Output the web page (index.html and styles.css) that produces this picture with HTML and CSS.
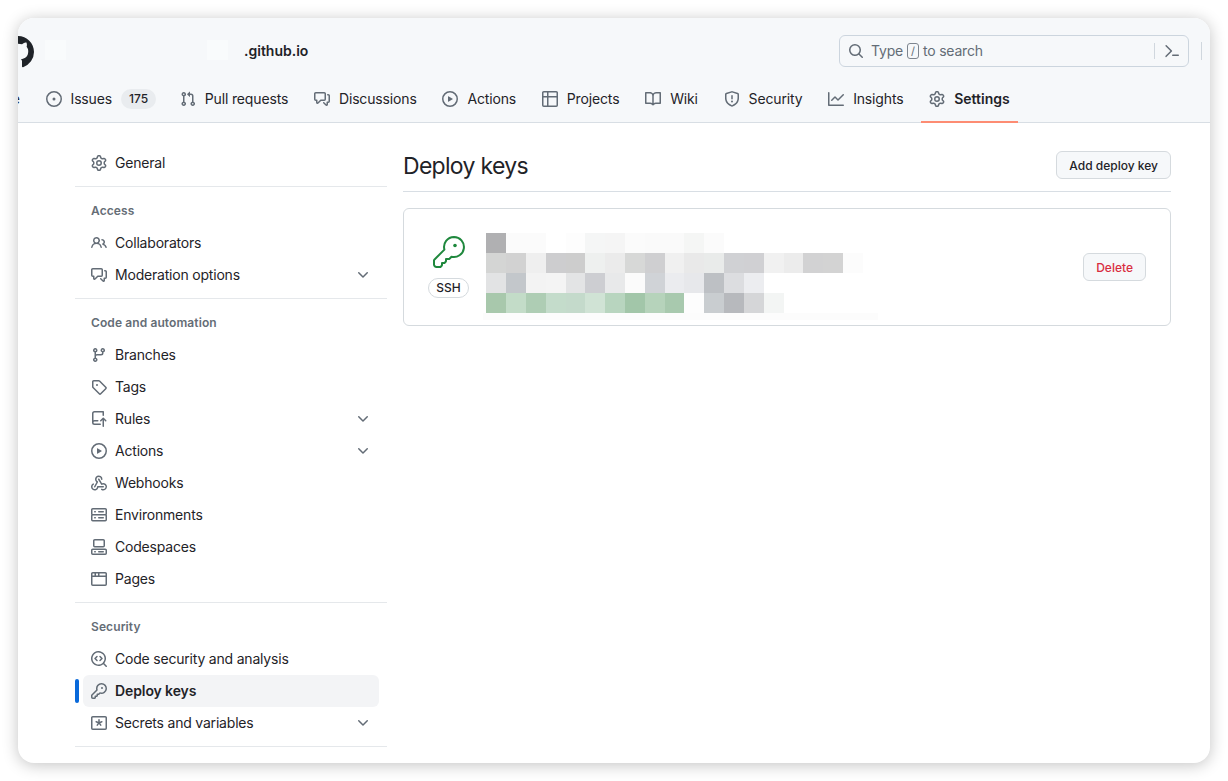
FILE: index.html
```html
<!DOCTYPE html>
<html lang="en">
<head>
<meta charset="utf-8">
<title>Deploy keys</title>
<link rel="stylesheet" href="styles.css">
</head>
<body>
<svg class="sprite" xmlns="http://www.w3.org/2000/svg">
<symbol id="i-mark" viewBox="0 0 16 16"><path d="M8 0c4.42 0 8 3.58 8 8a8.013 8.013 0 0 1-5.45 7.59c-.4.08-.55-.17-.55-.38 0-.27.01-1.13.01-2.2 0-.75-.25-1.23-.54-1.48 1.78-.2 3.65-.88 3.65-3.95 0-.88-.31-1.59-.82-2.15.08-.2.36-1.02-.08-2.12 0 0-.67-.22-2.2.82-.64-.18-1.32-.27-2-.27-.68 0-1.36.09-2 .27-1.53-1.03-2.2-.82-2.2-.82-.44 1.1-.16 1.92-.08 2.12-.51.56-.82 1.28-.82 2.15 0 3.06 1.86 3.75 3.64 3.95-.23.2-.44.55-.51 1.07-.46.21-1.61.55-2.33-.66-.15-.24-.6-.83-1.23-.82-.67.01-.27.38.01.53.34.19.73.9.82 1.13.16.45.68 1.31 2.69.94 0 .67.01 1.3.01 1.49 0 .21-.15.45-.55.38A7.995 7.995 0 0 1 0 8c0-4.42 3.58-8 8-8Z"/></symbol>
<symbol id="i-issue" viewBox="0 0 16 16"><path d="M8 9.5a1.5 1.5 0 1 0 0-3 1.5 1.5 0 0 0 0 3Z"/><path d="M8 0a8 8 0 1 1 0 16A8 8 0 0 1 8 0ZM1.5 8a6.5 6.5 0 1 0 13 0 6.5 6.5 0 0 0-13 0Z"/></symbol>
<symbol id="i-pr" viewBox="0 0 16 16"><path d="M1.5 3.25a2.25 2.25 0 1 1 3 2.122v5.256a2.251 2.251 0 1 1-1.5 0V5.372A2.25 2.25 0 0 1 1.5 3.25Zm5.677-.177L9.573.677A.25.25 0 0 1 10 .854V2.5h1A2.5 2.5 0 0 1 13.5 5v5.628a2.251 2.251 0 1 1-1.5 0V5a1 1 0 0 0-1-1h-1v1.646a.25.25 0 0 1-.427.177L7.177 3.427a.25.25 0 0 1 0-.354ZM3.75 2.5a.75.75 0 1 0 0 1.5.75.75 0 0 0 0-1.5Zm0 9.5a.75.75 0 1 0 0 1.5.75.75 0 0 0 0-1.5Zm8.25.75a.75.75 0 1 0 1.5 0 .75.75 0 0 0-1.5 0Z"/></symbol>
<symbol id="i-discuss" viewBox="0 0 16 16"><path d="M1.75 1h8.5c.966 0 1.75.784 1.75 1.75v5.5A1.75 1.75 0 0 1 10.25 10H7.061l-2.574 2.573A1.458 1.458 0 0 1 2 11.543V10h-.25A1.75 1.75 0 0 1 0 8.25v-5.5C0 1.784.784 1 1.75 1ZM1.5 2.75v5.5c0 .138.112.25.25.25h1a.75.75 0 0 1 .75.75v2.19l2.72-2.72a.749.749 0 0 1 .53-.22h3.5a.25.25 0 0 0 .25-.25v-5.5a.25.25 0 0 0-.25-.25h-8.5a.25.25 0 0 0-.25.25Zm13 2a.25.25 0 0 0-.25-.25h-.5a.75.75 0 0 1 0-1.5h.5c.966 0 1.75.784 1.75 1.75v5.5A1.75 1.75 0 0 1 14.25 12H14v1.543a1.458 1.458 0 0 1-2.487 1.03L9.22 12.28a.749.749 0 0 1 .326-1.275.749.749 0 0 1 .734.215l2.22 2.22v-2.19a.75.75 0 0 1 .75-.75h1a.25.25 0 0 0 .25-.25Z"/></symbol>
<symbol id="i-play" viewBox="0 0 16 16"><path d="M8 0a8 8 0 1 1 0 16A8 8 0 0 1 8 0ZM1.5 8a6.5 6.5 0 1 0 13 0 6.5 6.5 0 0 0-13 0Zm4.879-2.773 4.264 2.559a.25.25 0 0 1 0 .428l-4.264 2.559A.25.25 0 0 1 6 10.559V5.442a.25.25 0 0 1 .379-.215Z"/></symbol>
<symbol id="i-table" viewBox="0 0 16 16"><path d="M0 1.75C0 .784.784 0 1.75 0h12.5C15.216 0 16 .784 16 1.75v12.5A1.75 1.75 0 0 1 14.25 16H1.75A1.75 1.75 0 0 1 0 14.25ZM6.5 6.5v8h7.75a.25.25 0 0 0 .25-.25V6.5Zm8-1.5V1.75a.25.25 0 0 0-.25-.25H6.5V5Zm-13 1.5v7.75c0 .138.112.25.25.25H5v-8ZM5 5V1.5H1.75a.25.25 0 0 0-.25.25V5Z"/></symbol>
<symbol id="i-book" viewBox="0 0 16 16"><path d="M0 1.75A.75.75 0 0 1 .75 1h4.253c1.227 0 2.317.59 3 1.501A3.743 3.743 0 0 1 11.006 1h4.245a.75.75 0 0 1 .75.75v10.5a.75.75 0 0 1-.75.75h-4.507a2.25 2.25 0 0 0-1.591.659l-.622.621a.75.75 0 0 1-1.06 0l-.622-.621A2.25 2.25 0 0 0 5.258 13H.75a.75.75 0 0 1-.75-.75Zm7.251 10.324.004-5.073-.002-2.253A2.25 2.25 0 0 0 5.003 2.5H1.5v9h3.757a3.75 3.75 0 0 1 1.994.574ZM8.755 4.75l-.004 7.322a3.752 3.752 0 0 1 1.992-.572H14.5v-9h-3.495a2.25 2.25 0 0 0-2.25 2.25Z"/></symbol>
<symbol id="i-shield" viewBox="0 0 16 16"><path d="M7.467.133a1.748 1.748 0 0 1 1.066 0l5.25 1.68A1.75 1.75 0 0 1 15 3.48V7c0 1.566-.32 3.182-1.303 4.682-.983 1.498-2.585 2.813-5.032 3.855a1.697 1.697 0 0 1-1.33 0c-2.447-1.042-4.049-2.357-5.032-3.855C1.32 10.182 1 8.566 1 7V3.48a1.75 1.75 0 0 1 1.217-1.667Zm.61 1.429a.25.25 0 0 0-.153 0l-5.25 1.68a.25.25 0 0 0-.174.238V7c0 1.358.275 2.666 1.057 3.86.784 1.194 2.121 2.34 4.366 3.297a.196.196 0 0 0 .154 0c2.245-.956 3.582-2.104 4.366-3.298C13.225 9.666 13.5 8.36 13.5 7V3.48a.251.251 0 0 0-.174-.237l-5.25-1.68ZM8.75 4.75v3a.75.75 0 0 1-1.5 0v-3a.75.75 0 0 1 1.5 0ZM9 10.5a1 1 0 1 1-2 0 1 1 0 0 1 2 0Z"/></symbol>
<symbol id="i-graph" viewBox="0 0 16 16"><path d="M1.5 1.75V13.5h13.75a.75.75 0 0 1 0 1.5H.75a.75.75 0 0 1-.75-.75V1.75a.75.75 0 0 1 1.5 0Zm14.28 2.53-5.25 5.25a.75.75 0 0 1-1.06 0L7 7.06 4.28 9.78a.751.751 0 0 1-1.042-.018.751.751 0 0 1-.018-1.042l3.25-3.25a.75.75 0 0 1 1.06 0L10 7.94l4.72-4.72a.751.751 0 0 1 1.042.018.751.751 0 0 1 .018 1.042Z"/></symbol>
<symbol id="i-gear" viewBox="0 0 16 16"><path d="M8 0a8.2 8.2 0 0 1 .701.031C9.444.095 9.99.645 10.16 1.29l.288 1.107c.018.066.079.158.212.224.231.114.454.243.668.386.123.082.233.09.299.071l1.103-.303c.644-.176 1.392.021 1.82.63.27.385.506.792.704 1.218.315.675.111 1.422-.364 1.891l-.814.806c-.049.048-.098.147-.088.294.016.257.016.515 0 .772-.01.147.038.246.088.294l.814.806c.475.469.679 1.216.364 1.891a7.977 7.977 0 0 1-.704 1.217c-.428.61-1.176.807-1.82.63l-1.102-.302c-.067-.019-.177-.011-.3.071a5.909 5.909 0 0 1-.668.386c-.133.066-.194.158-.211.224l-.29 1.106c-.168.646-.715 1.196-1.458 1.26a8.006 8.006 0 0 1-1.402 0c-.743-.064-1.289-.614-1.458-1.26l-.289-1.106c-.018-.066-.079-.158-.212-.224a5.738 5.738 0 0 1-.668-.386c-.123-.082-.233-.09-.299-.071l-1.103.303c-.644.176-1.392-.021-1.82-.63a8.12 8.12 0 0 1-.704-1.218c-.315-.675-.111-1.422.363-1.891l.815-.806c.05-.048.098-.147.088-.294a6.214 6.214 0 0 1 0-.772c.01-.147-.038-.246-.088-.294l-.815-.806C.635 6.045.431 5.298.746 4.623a7.92 7.92 0 0 1 .704-1.217c.428-.61 1.176-.807 1.82-.63l1.102.302c.067.019.177.011.3-.071.214-.143.437-.272.668-.386.133-.066.194-.158.211-.224l.29-1.106C6.009.645 6.556.095 7.299.03 7.53.01 7.764 0 8 0Zm-.571 1.525c-.036.003-.108.036-.137.146l-.289 1.105c-.147.561-.549.967-.998 1.189-.173.086-.34.183-.5.29-.417.278-.97.423-1.529.27l-1.103-.303c-.109-.03-.175.016-.195.045-.22.312-.412.644-.573.99-.014.031-.021.11.059.19l.815.806c.411.406.562.957.53 1.456a4.709 4.709 0 0 0 0 .582c.032.499-.119 1.05-.53 1.456l-.815.806c-.081.08-.073.159-.059.19.162.346.353.677.573.989.02.03.085.076.195.046l1.102-.303c.56-.153 1.113-.008 1.53.27.161.107.328.204.501.29.447.222.85.629.997 1.189l.289 1.105c.029.109.101.143.137.146a6.6 6.6 0 0 0 1.142 0c.036-.003.108-.036.137-.146l.289-1.105c.147-.561.549-.967.998-1.189.173-.086.34-.183.5-.29.417-.278.97-.423 1.529-.27l1.103.303c.109.029.175-.016.195-.045.22-.313.411-.644.573-.99.014-.031.021-.11-.059-.19l-.815-.806c-.411-.406-.562-.957-.53-1.456a4.709 4.709 0 0 0 0-.582c-.032-.499.119-1.05.53-1.456l.815-.806c.081-.08.073-.159.059-.19a6.464 6.464 0 0 0-.573-.989c-.02-.03-.085-.076-.195-.046l-1.102.303c-.56.153-1.113.008-1.53-.27a4.44 4.44 0 0 0-.501-.29c-.447-.222-.85-.629-.997-1.189l-.289-1.105c-.029-.11-.101-.143-.137-.146a6.6 6.6 0 0 0-1.142 0ZM11 8a3 3 0 1 1-6 0 3 3 0 0 1 6 0ZM9.5 8a1.5 1.5 0 1 0-3.001.001A1.5 1.5 0 0 0 9.5 8Z"/></symbol>
<symbol id="i-people" viewBox="0 0 16 16"><path d="M2 5.5a3.5 3.5 0 1 1 5.898 2.549 5.508 5.508 0 0 1 3.034 4.084.75.75 0 1 1-1.482.235 4 4 0 0 0-7.9 0 .75.75 0 0 1-1.482-.236A5.507 5.507 0 0 1 3.102 8.05 3.493 3.493 0 0 1 2 5.5ZM11 4a3.001 3.001 0 0 1 2.22 5.018 5.01 5.01 0 0 1 2.56 3.012.749.749 0 0 1-.885.954.752.752 0 0 1-.549-.514 3.507 3.507 0 0 0-2.522-2.372.75.75 0 0 1-.574-.73v-.352a.75.75 0 0 1 .416-.672A1.5 1.5 0 0 0 11 5.5.75.75 0 0 1 11 4Zm-5.5-.5a2 2 0 1 0-.001 3.999A2 2 0 0 0 5.5 3.5Z"/></symbol>
<symbol id="i-branch" viewBox="0 0 16 16"><path d="M9.5 3.25a2.25 2.25 0 1 1 3 2.122V6A2.5 2.5 0 0 1 10 8.5H6a1 1 0 0 0-1 1v1.128a2.251 2.251 0 1 1-1.5 0V5.372a2.25 2.25 0 1 1 1.5 0v1.836A2.493 2.493 0 0 1 6 7h4a1 1 0 0 0 1-1v-.628A2.25 2.25 0 0 1 9.5 3.25Zm-6 0a.75.75 0 1 0 1.5 0 .75.75 0 0 0-1.5 0Zm8.25-.75a.75.75 0 1 0 0 1.5.75.75 0 0 0 0-1.5ZM4.25 12a.75.75 0 1 0 0 1.5.75.75 0 0 0 0-1.5Z"/></symbol>
<symbol id="i-tag" viewBox="0 0 16 16"><path d="M1 7.775V2.75C1 1.784 1.784 1 2.75 1h5.025c.464 0 .91.184 1.238.513l6.25 6.25a1.75 1.75 0 0 1 0 2.474l-5.026 5.026a1.75 1.75 0 0 1-2.474 0l-6.25-6.25A1.752 1.752 0 0 1 1 7.775Zm1.5 0c0 .066.026.13.073.177l6.25 6.25a.25.25 0 0 0 .354 0l5.025-5.025a.25.25 0 0 0 0-.354l-6.25-6.25a.25.25 0 0 0-.177-.073H2.75a.25.25 0 0 0-.25.25ZM6 5a1 1 0 1 1 0 2 1 1 0 0 1 0-2Z"/></symbol>
<symbol id="i-push" viewBox="0 0 16 16"><path d="M1 2.5A2.5 2.5 0 0 1 3.5 0h8.75a.75.75 0 0 1 .75.75v3.5a.75.75 0 0 1-1.5 0V1.5h-8a1 1 0 0 0-1 1v6.708A2.493 2.493 0 0 1 3.5 9h3.25a.75.75 0 0 1 0 1.5H3.5a1 1 0 0 0 0 2h5.75a.75.75 0 0 1 0 1.5H3.5A2.5 2.5 0 0 1 1 11.5Zm13.23 7.79h-.001l-1.224-1.224v6.184a.75.75 0 0 1-1.5 0V9.066L10.28 10.29a.75.75 0 0 1-1.06-1.061l2.505-2.504a.75.75 0 0 1 1.06 0L15.29 9.23a.751.751 0 0 1-.018 1.042.751.751 0 0 1-1.042.018Z"/></symbol>
<symbol id="i-webhook" viewBox="0 0 16 16"><path d="M5.5 4.25a2.25 2.25 0 0 1 4.5 0 .75.75 0 0 0 1.5 0 3.75 3.75 0 1 0-6.14 2.889l-2.272 4.258a.75.75 0 0 0 1.324.706L7 7.25a.75.75 0 0 0-.309-1.015A2.25 2.25 0 0 1 5.5 4.25Z"/><path d="M7.364 3.607a.75.75 0 0 1 1.03.257l2.608 4.349a3.75 3.75 0 1 1-.628 6.785.75.75 0 0 1 .752-1.299 2.25 2.25 0 1 0-.033-3.88.75.75 0 0 1-1.03-.256L7.107 4.636a.75.75 0 0 1 .257-1.03Z"/><path d="M2.9 8.776A.75.75 0 0 1 2.625 9.8 2.25 2.25 0 1 0 6 11.75a.75.75 0 0 1 .75-.751h5.5a.75.75 0 0 1 0 1.5H7.425a3.751 3.751 0 1 1-5.55-3.998.75.75 0 0 1 1.024.274Z"/></symbol>
<symbol id="i-server" viewBox="0 0 16 16"><path d="M1.75 1h12.5c.966 0 1.75.784 1.75 1.75v4c0 .372-.116.717-.314 1 .198.283.314.628.314 1v4a1.75 1.75 0 0 1-1.75 1.75H1.75A1.75 1.75 0 0 1 0 12.75v-4c0-.358.109-.707.314-1a1.739 1.739 0 0 1-.314-1v-4C0 1.784.784 1 1.75 1ZM1.5 2.75v4c0 .138.112.25.25.25h12.5a.25.25 0 0 0 .25-.25v-4a.25.25 0 0 0-.25-.25H1.75a.25.25 0 0 0-.25.25Zm.25 5.75a.25.25 0 0 0-.25.25v4c0 .138.112.25.25.25h12.5a.25.25 0 0 0 .25-.25v-4a.25.25 0 0 0-.25-.25ZM7 4.75A.75.75 0 0 1 7.75 4h4.5a.75.75 0 0 1 0 1.5h-4.5A.75.75 0 0 1 7 4.75Zm.75 5.25h4.5a.75.75 0 0 1 0 1.5h-4.5a.75.75 0 0 1 0-1.5ZM3 4.75A.75.75 0 0 1 3.75 4h.5a.75.75 0 0 1 0 1.5h-.5A.75.75 0 0 1 3 4.75ZM3.75 10h.5a.75.75 0 0 1 0 1.5h-.5a.75.75 0 0 1 0-1.5Z"/></symbol>
<symbol id="i-codespaces" viewBox="0 0 16 16"><path d="M0 11.25c0-.966.784-1.75 1.75-1.75h12.5c.966 0 1.75.784 1.75 1.75v3A1.75 1.75 0 0 1 14.25 16H1.75A1.75 1.75 0 0 1 0 14.25Zm2-9.5C2 .784 2.784 0 3.75 0h8.5C13.216 0 14 .784 14 1.75v5a1.75 1.75 0 0 1-1.75 1.75h-8.5A1.75 1.75 0 0 1 2 6.75Zm1.75-.25a.25.25 0 0 0-.25.25v5c0 .138.112.25.25.25h8.5a.25.25 0 0 0 .25-.25v-5a.25.25 0 0 0-.25-.25Zm-2 9.5a.25.25 0 0 0-.25.25v3c0 .138.112.25.25.25h12.5a.25.25 0 0 0 .25-.25v-3a.25.25 0 0 0-.25-.25Z"/><path d="M7 12.75a.75.75 0 0 1 .75-.75h4.5a.75.75 0 0 1 0 1.5h-4.5a.75.75 0 0 1-.75-.75Zm-4 0a.75.75 0 0 1 .75-.75h.5a.75.75 0 0 1 0 1.5h-.5a.75.75 0 0 1-.75-.75Z"/></symbol>
<symbol id="i-browser" viewBox="0 0 16 16"><path d="M0 2.75C0 1.784.784 1 1.75 1h12.5c.966 0 1.75.784 1.75 1.75v10.5A1.75 1.75 0 0 1 14.25 15H1.75A1.75 1.75 0 0 1 0 13.25ZM14.5 6h-13v7.25c0 .138.112.25.25.25h12.5a.25.25 0 0 0 .25-.25Zm-6-3.5v2h6V2.75a.25.25 0 0 0-.25-.25ZM5 2.5v2h2v-2Zm-3.25 0a.25.25 0 0 0-.25.25V4.5h2v-2Z"/></symbol>
<symbol id="i-codescan" viewBox="0 0 16 16"><path d="M8.47 4.97a.75.75 0 0 0 0 1.06L9.94 7.5 8.47 8.97a.75.75 0 1 0 1.06 1.06l2-2a.75.75 0 0 0 0-1.06l-2-2a.75.75 0 0 0-1.06 0ZM6.53 6.03a.75.75 0 0 0-1.06-1.06l-2 2a.75.75 0 0 0 0 1.06l2 2a.75.75 0 1 0 1.06-1.06L5.06 7.5l1.47-1.47Z"/><path d="M12.246 13.307a7.501 7.501 0 1 1 1.06-1.06l2.474 2.473a.749.749 0 0 1-.326 1.275.749.749 0 0 1-.734-.215ZM1.5 7.5a6.002 6.002 0 0 0 3.608 5.504 6.002 6.002 0 0 0 6.486-1.117.748.748 0 0 1 .292-.293A6 6 0 1 0 1.5 7.5Z"/></symbol>
<symbol id="i-key" viewBox="0 0 16 16"><path d="M10.5 0a5.499 5.499 0 1 1-1.288 10.848l-.932.932a.749.749 0 0 1-.53.22H7v.75a.749.749 0 0 1-.22.53l-.5.5a.749.749 0 0 1-.53.22H5v.75a.749.749 0 0 1-.22.53l-.5.5a.749.749 0 0 1-.53.22h-2A1.75 1.75 0 0 1 0 14.25v-2c0-.199.079-.389.22-.53l4.932-4.932A5.5 5.5 0 0 1 10.5 0Zm-4 5.5c-.001.431.069.86.205 1.269a.75.75 0 0 1-.181.768L1.5 12.56v1.69c0 .138.112.25.25.25h1.69l.06-.06v-1.19a.75.75 0 0 1 .75-.75h1.19l.06-.06v-1.19a.75.75 0 0 1 .75-.75h1.19l1.023-1.025a.75.75 0 0 1 .768-.18A4 4 0 1 0 6.5 5.5ZM11 6a1 1 0 1 1 0-2 1 1 0 0 1 0 2Z"/></symbol>
<symbol id="i-asterisk" viewBox="0 0 16 16"><path d="M0 2.75C0 1.784.784 1 1.75 1h12.5c.966 0 1.75.784 1.75 1.75v10.5A1.75 1.75 0 0 1 14.25 15H1.75A1.75 1.75 0 0 1 0 13.25Zm1.75-.25a.25.25 0 0 0-.25.25v10.5c0 .138.112.25.25.25h12.5a.25.25 0 0 0 .25-.25V2.75a.25.25 0 0 0-.25-.25Z"/><path d="M7.25 4.75a.75.75 0 0 1 1.5 0v1.956l1.86-.604a.75.75 0 1 1 .463 1.426l-1.86.604 1.15 1.583a.75.75 0 1 1-1.214.882L8 9.014l-1.15 1.583a.75.75 0 1 1-1.214-.882l1.15-1.583-1.86-.604a.75.75 0 1 1 .463-1.426l1.86.604Z"/></symbol>
<symbol id="i-chevron" viewBox="0 0 16 16"><path d="M12.78 5.22a.749.749 0 0 1 0 1.06l-4.25 4.25a.749.749 0 0 1-1.06 0L3.22 6.28a.749.749 0 1 1 1.06-1.06L8 8.939l3.72-3.719a.749.749 0 0 1 1.06 0Z"/></symbol>
<symbol id="i-search" viewBox="0 0 16 16"><path d="M10.68 11.74a6 6 0 0 1-7.922-8.982 6 6 0 0 1 8.982 7.922l3.04 3.04a.749.749 0 0 1-.326 1.275.749.749 0 0 1-.734-.215ZM11.5 7a4.499 4.499 0 1 0-8.997 0A4.499 4.499 0 0 0 11.5 7Z"/></symbol>
<symbol id="i-palette" viewBox="0 0 16 16"><path d="m6.354 8.04-4.773 4.773a.75.75 0 1 0 1.061 1.06L7.945 8.57a.75.75 0 0 0 0-1.06L2.642 2.206a.75.75 0 0 0-1.06 1.061L6.353 8.04ZM8.75 11.5a.75.75 0 0 0 0 1.5h5.5a.75.75 0 0 0 0-1.5h-5.5Z"/></symbol>
</svg>

<div class="window">
  <header class="header">
    <div class="toprow">
      <svg class="logo"><use href="#i-mark"/></svg>
      <div class="redacted"><span class="blot"></span><span class="blot"></span></div>
      <span class="repo">.github.io</span>
      <div class="search">
        <svg class="ico"><use href="#i-search"/></svg>
        <span class="search-text"><span>Type</span><span class="kbd">/</span><span>to search</span></span>
        <span class="search-sep"></span>
        <svg class="ico"><use href="#i-palette"/></svg>
      </div>
      <span class="top-sep"></span>
    </div>
    <nav class="tabs">
      <a class="tab">Code</a>
      <a class="tab"><svg class="ico"><use href="#i-issue"/></svg>Issues<span class="counter">175</span></a>
      <a class="tab"><svg class="ico"><use href="#i-pr"/></svg>Pull requests</a>
      <a class="tab"><svg class="ico"><use href="#i-discuss"/></svg>Discussions</a>
      <a class="tab"><svg class="ico"><use href="#i-play"/></svg>Actions</a>
      <a class="tab"><svg class="ico"><use href="#i-table"/></svg>Projects</a>
      <a class="tab"><svg class="ico"><use href="#i-book"/></svg>Wiki</a>
      <a class="tab"><svg class="ico"><use href="#i-shield"/></svg>Security</a>
      <a class="tab"><svg class="ico"><use href="#i-graph"/></svg>Insights</a>
      <a class="tab tab-active"><svg class="ico"><use href="#i-gear"/></svg>Settings</a>
    </nav>
  </header>

  <div class="page">
    <aside class="side">
      <a class="item"><svg class="ico"><use href="#i-gear"/></svg>General</a>
      <hr class="rule">
      <div class="label">Access</div>
      <a class="item"><svg class="ico"><use href="#i-people"/></svg>Collaborators</a>
      <a class="item"><svg class="ico"><use href="#i-discuss"/></svg>Moderation options<svg class="ico chev"><use href="#i-chevron"/></svg></a>
      <hr class="rule">
      <div class="label">Code and automation</div>
      <a class="item"><svg class="ico"><use href="#i-branch"/></svg>Branches</a>
      <a class="item"><svg class="ico"><use href="#i-tag"/></svg>Tags</a>
      <a class="item"><svg class="ico"><use href="#i-push"/></svg>Rules<svg class="ico chev"><use href="#i-chevron"/></svg></a>
      <a class="item"><svg class="ico"><use href="#i-play"/></svg>Actions<svg class="ico chev"><use href="#i-chevron"/></svg></a>
      <a class="item"><svg class="ico"><use href="#i-webhook"/></svg>Webhooks</a>
      <a class="item"><svg class="ico"><use href="#i-server"/></svg>Environments</a>
      <a class="item"><svg class="ico"><use href="#i-codespaces"/></svg>Codespaces</a>
      <a class="item"><svg class="ico"><use href="#i-browser"/></svg>Pages</a>
      <hr class="rule">
      <div class="label">Security</div>
      <a class="item"><svg class="ico"><use href="#i-codescan"/></svg>Code security and analysis</a>
      <a class="item item-active"><svg class="ico"><use href="#i-key"/></svg>Deploy keys</a>
      <a class="item"><svg class="ico"><use href="#i-asterisk"/></svg>Secrets and variables<svg class="ico chev"><use href="#i-chevron"/></svg></a>
      <hr class="rule">
    </aside>

    <main class="main">
      <div class="head">
        <h1 class="title">Deploy keys</h1>
        <button class="btn">Add deploy key</button>
      </div>
      <section class="card">
        <div class="keycol">
          <svg class="bigkey" viewBox="0 0 32 32"><path d="M21 1a10 10 0 1 1-2.5 19.7l-2 2a1 1 0 0 1-.7.3H13v2.1a1 1 0 0 1-.3.7l-1 1a1 1 0 0 1-.7.3H9v1.9a1 1 0 0 1-.3.7l-1 1a1 1 0 0 1-.7.3H3.5A2.5 2.5 0 0 1 1 28.5v-4.1a1 1 0 0 1 .3-.7l10.1-10.1A10 10 0 0 1 21 1Z"/><circle class="keydot" cx="22" cy="9.5" r="1.8"/></svg>
          <span class="ssh">SSH</span>
        </div>
        <svg class="pixels" viewBox="0 0 400 116" shape-rendering="crispEdges">
          <g transform="translate(0 24)">
            <rect x="3" y="0" width="20" height="20" fill="#b0b0b2"/><rect x="23" y="0" width="20" height="20" fill="#fbfbfb"/><rect x="43" y="0" width="20" height="20" fill="#fbfbfb"/><rect x="83" y="0" width="20" height="20" fill="#fdfdfd"/><rect x="102" y="0" width="20" height="20" fill="#f5f6f6"/><rect x="122" y="0" width="20" height="20" fill="#f5f5f5"/><rect x="142" y="0" width="20" height="20" fill="#fbfbfb"/><rect x="162" y="0" width="20" height="20" fill="#fafafa"/><rect x="182" y="0" width="20" height="20" fill="#fafafa"/><rect x="201" y="0" width="20" height="20" fill="#f5f6f5"/><rect x="221" y="0" width="20" height="20" fill="#fbfbfb"/>
            <rect x="3" y="20" width="20" height="20" fill="#d4d5d4"/><rect x="23" y="20" width="20" height="20" fill="#d2d2d2"/><rect x="43" y="20" width="20" height="20" fill="#efefef"/><rect x="63" y="20" width="20" height="20" fill="#cdcdcf"/><rect x="83" y="20" width="20" height="20" fill="#cdcdcd"/><rect x="102" y="20" width="20" height="20" fill="#eef0ef"/><rect x="122" y="20" width="20" height="20" fill="#ebebeb"/><rect x="142" y="20" width="20" height="20" fill="#d7d8d7"/><rect x="162" y="20" width="20" height="20" fill="#cfcfd1"/><rect x="182" y="20" width="20" height="20" fill="#f0f0f0"/><rect x="201" y="20" width="20" height="20" fill="#e9e9e9"/><rect x="221" y="20" width="20" height="20" fill="#e9ebea"/><rect x="241" y="20" width="20" height="20" fill="#d0d1d4"/><rect x="261" y="20" width="20" height="20" fill="#d0d0d3"/><rect x="281" y="20" width="20" height="20" fill="#f1f1f1"/><rect x="301" y="20" width="20" height="20" fill="#ececec"/><rect x="320" y="20" width="20" height="20" fill="#d2d2d3"/><rect x="340" y="20" width="20" height="20" fill="#d3d3d3"/><rect x="360" y="20" width="20" height="20" fill="#fcfcfc"/>
            <rect x="3" y="40" width="20" height="20" fill="#e2e3e4"/><rect x="23" y="40" width="20" height="20" fill="#c3c7cb"/><rect x="43" y="40" width="20" height="20" fill="#f3f3f3"/><rect x="63" y="40" width="20" height="20" fill="#f4f4f4"/><rect x="83" y="40" width="20" height="20" fill="#e3e4e5"/><rect x="102" y="40" width="20" height="20" fill="#cdced2"/><rect x="122" y="40" width="20" height="20" fill="#e8e9ea"/><rect x="142" y="40" width="20" height="20" fill="#fbfbfb"/><rect x="162" y="40" width="20" height="20" fill="#d0d3d7"/><rect x="182" y="40" width="20" height="20" fill="#ebecef"/><rect x="201" y="40" width="20" height="20" fill="#e7e8eb"/><rect x="221" y="40" width="20" height="20" fill="#bdc0c4"/><rect x="241" y="40" width="20" height="20" fill="#dcdde0"/><rect x="261" y="40" width="20" height="20" fill="#ecedf0"/>
            <rect x="3" y="60" width="20" height="20" fill="#a8c8ac"/><rect x="23" y="60" width="20" height="20" fill="#c3dcc8"/><rect x="43" y="60" width="20" height="20" fill="#aecdb4"/><rect x="63" y="60" width="20" height="20" fill="#c4dccb"/><rect x="83" y="60" width="20" height="20" fill="#c4dacb"/><rect x="102" y="60" width="20" height="20" fill="#d0e3d5"/><rect x="122" y="60" width="20" height="20" fill="#b8d5bf"/><rect x="142" y="60" width="20" height="20" fill="#a2c6a9"/><rect x="162" y="60" width="20" height="20" fill="#b6d3bb"/><rect x="182" y="60" width="20" height="20" fill="#a8c9ae"/><rect x="201" y="60" width="20" height="20" fill="#fdfdfd"/><rect x="221" y="60" width="20" height="20" fill="#c9cdd0"/><rect x="241" y="60" width="20" height="20" fill="#b7b9bd"/><rect x="261" y="60" width="20" height="20" fill="#d5d6d8"/><rect x="281" y="60" width="20" height="20" fill="#f3f5f4"/>
            <rect x="0" y="80" width="395" height="7" fill="#fcfcfc"/>
          </g>
        </svg>
        <button class="btn btn-danger">Delete</button>
      </section>
    </main>
  </div>
</div>
</body>
</html>
```
FILE: styles.css
```css
* { box-sizing: border-box; }
html, body { height: 100%; }
body {
  margin: 0;
  padding: 18px;
  background: #fff;
  overflow: hidden;
  font-family: Inter, "Liberation Sans", sans-serif;
  font-size: 14px;
  line-height: 20px;
  letter-spacing: -0.2px;
  color: #1f2328;
}
.sprite { display: none; }
.ico { width: 16px; height: 16px; fill: #636c76; flex: none; }

.window {
  height: 745px;
  border-radius: 16px;
  overflow: hidden;
  background: #fff;
  box-shadow: 0 2px 16px rgba(0, 0, 0, .24);
}

.header {
  background: #f6f8fa;
  border-bottom: 1px solid #d8dee4;
  height: 105px;
}
.toprow {
  height: 65px;
  display: flex;
  align-items: center;
  padding-right: 8px;
}
.logo { width: 32px; height: 32px; margin-left: -16px; margin-top: 2px; fill: #1f2328; flex: none; }
.redacted { width: 183px; height: 20px; margin: -2px 0 0 11px; display: flex; justify-content: space-between; }
.blot { width: 21px; height: 20px; background: #f9fbfc; }
.repo { margin-left: 16px; font-weight: 600; letter-spacing: 0; }

.search {
  margin-left: auto;
  width: 350px;
  height: 32px;
  border: 1px solid #ccd5de;
  border-radius: 6px;
  display: flex;
  align-items: center;
  padding: 0 8px;
  color: #636c76;
}
.search-text { margin-left: 7px; display: flex; align-items: center; gap: 4px; white-space: nowrap; }
.kbd {
  width: 12px;
  height: 16px;
  border: 1px solid #7d858f;
  border-radius: 3px;
  font-size: 11px;
  line-height: 14px;
  text-align: center;
}
.search-sep { width: 1px; height: 16px; background: #d0d7de; margin: 0 9px 0 auto; }
.top-sep { width: 1px; height: 18px; background: #d0d7de; margin-left: 12px; }

.tabs { display: flex; height: 32px; gap: 9.75px; margin-left: -41px; letter-spacing: -0.15px; }
.tab {
  position: relative;
  display: flex;
  align-items: center;
  gap: 9px;
  padding: 0 8px;
  white-space: nowrap;
}
.tab-active { font-weight: 600; letter-spacing: 0; }
.tab-active::after {
  content: "";
  position: absolute;
  left: 0;
  right: 0;
  bottom: -8px;
  height: 2px;
  background: #fd8c73;
}
.counter {
  width: 35px;
  height: 20px;
  margin-right: -2px;
  border-radius: 10px;
  background: #e9ecef;
  font-size: 12px;
  font-weight: 500;
  letter-spacing: 0;
  line-height: 20px;
  text-align: center;
}

.page { display: flex; gap: 16px; padding: 24px 39px 0 57px; }
.side { width: 312px; flex: none; }
.item {
  position: relative;
  height: 32px;
  margin: 0 8px;
  padding: 0 8px;
  border-radius: 6px;
  display: flex;
  align-items: center;
  gap: 8px;
}
.item-active { background: #f3f4f6; font-weight: 600; letter-spacing: -0.1px; }
.item-active::before {
  content: "";
  position: absolute;
  left: -8px;
  top: 4px;
  width: 4px;
  height: 24px;
  border-radius: 2px;
  background: #0969da;
}
.chev { margin-left: auto; }
.rule { height: 1px; margin: 7px 0 0; border: 0; background: #e5e8eb; }
.label {
  height: 32px;
  margin-top: 8px;
  padding-left: 16px;
  font-size: 12px;
  font-weight: 600;
  letter-spacing: 0.1px;
  line-height: 32px;
  color: #656d76;
}

.main { flex: 1; min-width: 0; }
.head {
  display: flex;
  align-items: center;
  justify-content: space-between;
  padding: 4px 0 12px;
  border-bottom: 1px solid #d8dee4;
}
.title { margin: 0 0 -2px; font-size: 23px; font-weight: 400; letter-spacing: -0.7px; line-height: 30px; }
.btn {
  height: 28px;
  padding: 0 12px;
  border: 1px solid #d5dade;
  border-radius: 6px;
  background: #f6f8fa;
  color: #1f2328;
  font: 500 12px Inter, "Liberation Sans", sans-serif;
}
.btn-danger { color: #d92d3f; margin-left: auto; }
.card {
  height: 118px;
  margin-top: 16px;
  padding: 0 24px;
  border: 1px solid #d5dade;
  border-radius: 6px;
  display: flex;
  align-items: center;
}
.keycol { width: 41px; display: flex; flex-direction: column; align-items: center; gap: 10px; flex: none; }
.bigkey { width: 32px; height: 32px; fill: none; stroke: #1f883d; stroke-width: 2; stroke-linejoin: round; }
.keydot { fill: #1f883d; stroke: none; }
.ssh {
  width: 41px;
  height: 20px;
  border: 1px solid #d5dade;
  border-radius: 10px;
  font-size: 12px;
  font-weight: 500;
  letter-spacing: 0;
  line-height: 18px;
  text-align: center;
}
.pixels { width: 400px; height: 116px; margin-left: 14px; flex: none; }
```
